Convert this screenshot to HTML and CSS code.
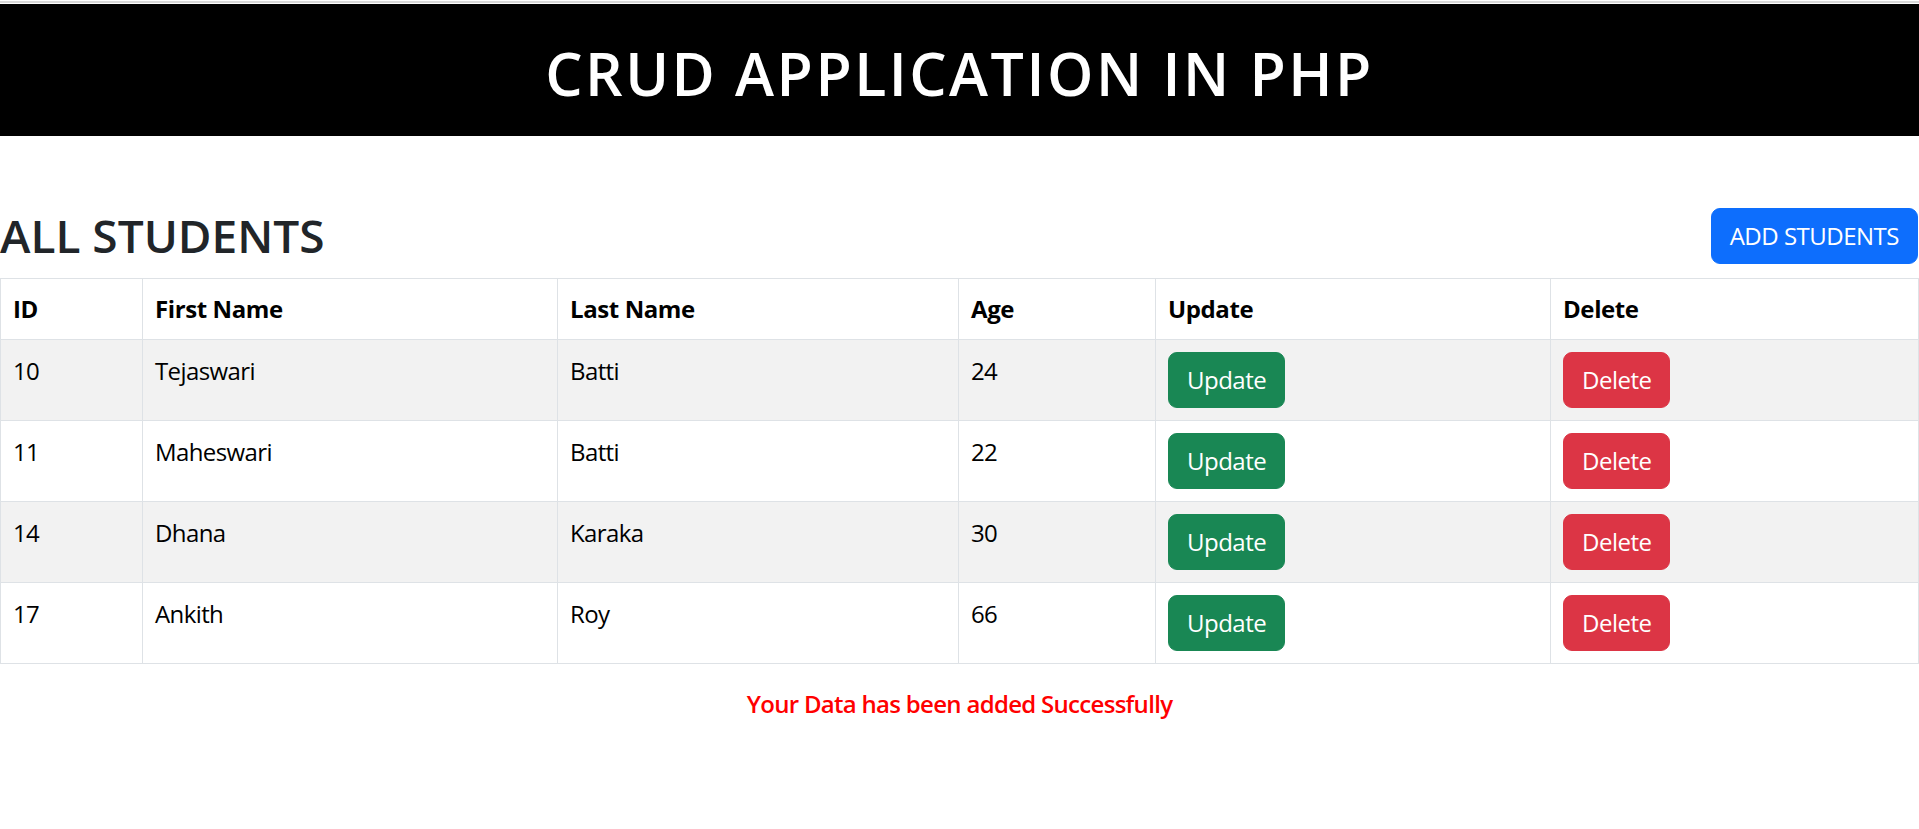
FILE: index.html
```html
<!DOCTYPE html>
<html lang="en">
<head>
<meta charset="utf-8">
<title>CRUD Application in PHP</title>
<link rel="stylesheet" href="styles.css">
</head>
<body>
<div class="topline"></div>
<header class="banner">
  <h1 class="banner-title">CRUD APPLICATION IN PHP</h1>
</header>
<main class="container">
  <div class="list-head">
    <h2 class="list-title">ALL STUDENTS</h2>
    <button class="btn btn-primary">ADD STUDENTS</button>
  </div>
  <table class="table">
    <colgroup>
      <col class="col-id">
      <col class="col-first">
      <col class="col-last">
      <col class="col-age">
      <col class="col-update">
      <col class="col-delete">
    </colgroup>
    <thead>
      <tr><th>ID</th><th>First Name</th><th>Last Name</th><th>Age</th><th>Update</th><th>Delete</th></tr>
    </thead>
    <tbody>
      <tr class="striped"><td>10</td><td>Tejaswari</td><td>Batti</td><td>24</td><td><a class="btn btn-success">Update</a></td><td><a class="btn btn-danger">Delete</a></td></tr>
      <tr><td>11</td><td>Maheswari</td><td>Batti</td><td>22</td><td><a class="btn btn-success">Update</a></td><td><a class="btn btn-danger">Delete</a></td></tr>
      <tr class="striped"><td>14</td><td>Dhana</td><td>Karaka</td><td>30</td><td><a class="btn btn-success">Update</a></td><td><a class="btn btn-danger">Delete</a></td></tr>
      <tr><td>17</td><td>Ankith</td><td>Roy</td><td>66</td><td><a class="btn btn-success">Update</a></td><td><a class="btn btn-danger">Delete</a></td></tr>
    </tbody>
  </table>
  <h6 class="message">Your Data has been added Successfully</h6>
</main>
</body>
</html>
```
FILE: styles.css
```css
html, body {
  margin: 0;
  padding: 0;
  background: #fff;
}
body {
  font-family: "Open Sans", "Noto Sans", sans-serif;
  font-size: 24px;
  line-height: 1.5;
  color: #212529;
}
.topline {
  height: 2px;
  margin-top: 1px;
  background: #d9d9d9;
}
.banner {
  background: #000;
  height: 132px;
  margin-top: 1px;
  display: flex;
  align-items: center;
  justify-content: center;
}
.banner-title {
  margin: 0;
  color: #fff;
  font-size: 59px;
  font-weight: 600;
  line-height: 1.2;
  letter-spacing: 2.5px;
  padding-top: 6px;
}
.container {
  padding: 0;
}
.list-head {
  display: flex;
  justify-content: space-between;
  align-items: center;
  margin-top: 72px;
  margin-bottom: 14px;
}
.list-title {
  margin: 0;
  font-size: 46px;
  font-weight: 600;
  line-height: 1.2;
  color: #212529;
  letter-spacing: 0;
}
.btn {
  display: inline-block;
  font-family: inherit;
  font-size: 24px;
  line-height: 36px;
  font-weight: 400;
  padding: 9px 18px;
  border: 1px solid transparent;
  border-radius: 9px;
  color: #fff;
  cursor: pointer;
  text-decoration: none;
  letter-spacing: -0.5px;
}
.btn-primary {
  background: #0d6efd;
  border-color: #0d6efd;
  margin-right: 1px;
}
.btn-success {
  background: #198754;
  border-color: #198754;
}
.btn-danger {
  background: #dc3545;
  border-color: #dc3545;
}
.table {
  width: 100%;
  border-collapse: collapse;
  table-layout: fixed;
  color: #000;
  vertical-align: top;
}
.col-id { width: 142px; }
.col-first { width: 415px; }
.col-last { width: 401px; }
.col-age { width: 197px; }
.col-update { width: 395px; }
.col-delete { width: auto; }
.table th,
.table td {
  border: 1px solid #dee2e6;
  padding: 12px;
  text-align: left;
  vertical-align: top;
  line-height: 36px;
}
.table th {
  font-weight: 700;
  letter-spacing: -0.4px;
}
.table td {
  letter-spacing: -0.6px;
  padding-top: 13px;
  padding-bottom: 12px;
}
.table td .btn {
  margin-top: -1px;
}
.table tr.striped td {
  background: #f2f2f2;
}
.message {
  margin: 26px 0 0;
  text-align: center;
  color: #ff0000;
  font-size: 24px;
  font-weight: 600;
  line-height: 1.2;
  letter-spacing: -0.7px;
}
```
